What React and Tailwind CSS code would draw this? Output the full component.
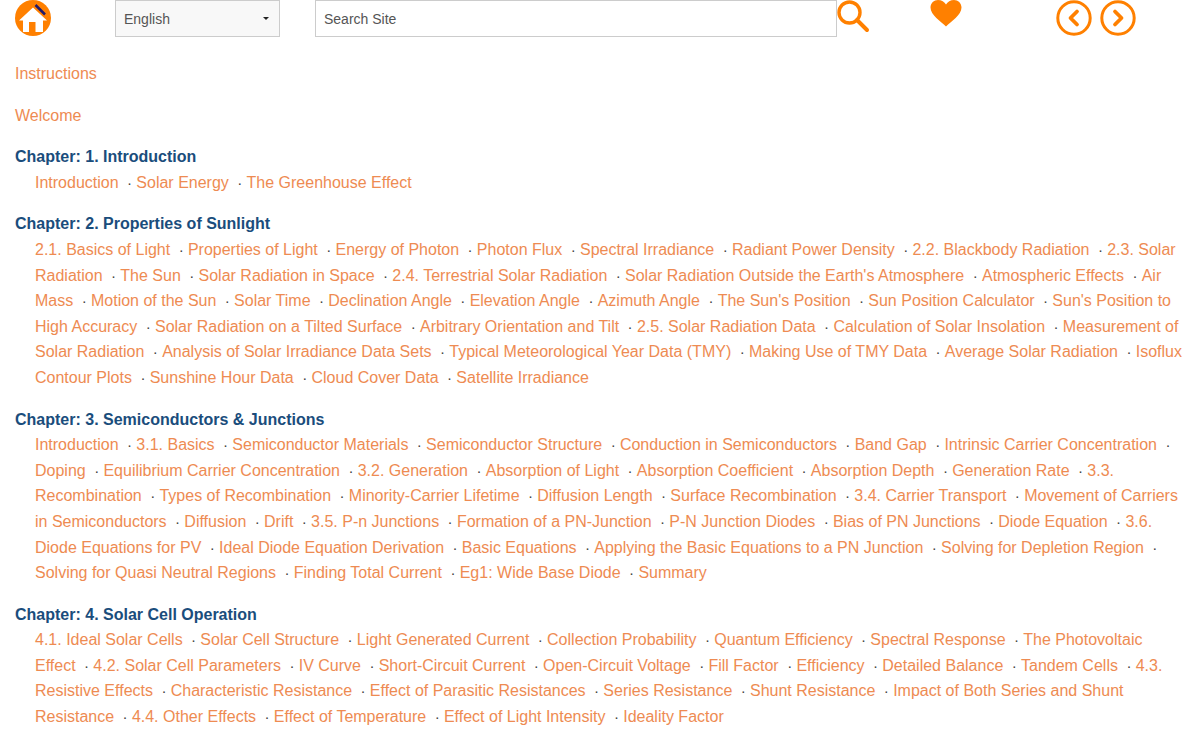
const chapters = [
  {
    title: 'Chapter: 1. Introduction',
    links: ['Introduction', 'Solar Energy', 'The Greenhouse Effect'],
  },
  {
    title: 'Chapter: 2. Properties of Sunlight',
    links: [
      '2.1. Basics of Light', 'Properties of Light', 'Energy of Photon', 'Photon Flux', 'Spectral Irradiance',
      'Radiant Power Density', '2.2. Blackbody Radiation', '2.3. Solar Radiation', 'The Sun', 'Solar Radiation in Space',
      '2.4. Terrestrial Solar Radiation', "Solar Radiation Outside the Earth's Atmosphere", 'Atmospheric Effects', 'Air Mass',
      'Motion of the Sun', 'Solar Time', 'Declination Angle', 'Elevation Angle', 'Azimuth Angle', "The Sun's Position",
      'Sun Position Calculator', "Sun's Position to High Accuracy", 'Solar Radiation on a Tilted Surface',
      'Arbitrary Orientation and Tilt', '2.5. Solar Radiation Data', 'Calculation of Solar Insolation',
      'Measurement of Solar Radiation', 'Analysis of Solar Irradiance Data Sets', 'Typical Meteorological Year Data (TMY)',
      'Making Use of TMY Data', 'Average Solar Radiation', 'Isoflux Contour Plots', 'Sunshine Hour Data', 'Cloud Cover Data',
      'Satellite Irradiance',
    ],
  },
  {
    title: 'Chapter: 3. Semiconductors & Junctions',
    links: [
      'Introduction', '3.1. Basics', 'Semiconductor Materials', 'Semiconductor Structure', 'Conduction in Semiconductors',
      'Band Gap', 'Intrinsic Carrier Concentration', 'Doping', 'Equilibrium Carrier Concentration', '3.2. Generation',
      'Absorption of Light', 'Absorption Coefficient', 'Absorption Depth', 'Generation Rate', '3.3. Recombination',
      'Types of Recombination', 'Minority-Carrier Lifetime', 'Diffusion Length', 'Surface Recombination',
      '3.4. Carrier Transport', 'Movement of Carriers in Semiconductors', 'Diffusion', 'Drift', '3.5. P-n Junctions',
      'Formation of a PN-Junction', 'P-N Junction Diodes', 'Bias of PN Junctions', 'Diode Equation',
      '3.6. Diode Equations for PV', 'Ideal Diode Equation Derivation', 'Basic Equations',
      'Applying the Basic Equations to a PN Junction', 'Solving for Depletion Region', 'Solving for Quasi Neutral Regions',
      'Finding Total Current', 'Eg1: Wide Base Diode', 'Summary',
    ],
  },
  {
    title: 'Chapter: 4. Solar Cell Operation',
    links: [
      '4.1. Ideal Solar Cells', 'Solar Cell Structure', 'Light Generated Current', 'Collection Probability',
      'Quantum Efficiency', 'Spectral Response', 'The Photovoltaic Effect', '4.2. Solar Cell Parameters', 'IV Curve',
      'Short-Circuit Current', 'Open-Circuit Voltage', 'Fill Factor', 'Efficiency', 'Detailed Balance', 'Tandem Cells',
      '4.3. Resistive Effects', 'Characteristic Resistance', 'Effect of Parasitic Resistances', 'Series Resistance',
      'Shunt Resistance', 'Impact of Both Series and Shunt Resistance', '4.4. Other Effects', 'Effect of Temperature',
      'Effect of Light Intensity', 'Ideality Factor',
    ],
  },
]

function HomeIcon() {
  return (
    <svg width="36" height="36" viewBox="0 0 36 36" className="shrink-0">
      <circle cx="18" cy="18" r="18" fill="#ff8000" />
      <path d="M18 7.500 L32 20.500 L28 20.500 L28 32 L20.500 32 L20.500 22 L14 22 L14 32 L8 32 L8 20.500 L4 20.500 Z" fill="#fff" />
      <path d="M20.500 5 L30 14.500" stroke="#1f1a6b" strokeWidth="2.500" />
    </svg>
  )
}

function ArrowCircle({ dir }) {
  return (
    <svg width="36" height="36" viewBox="0 0 36 36" fill="none" stroke="#ff8000" className="shrink-0">
      <circle cx="18" cy="18" r="16.200" strokeWidth="3" />
      <path
        d={dir === 'left' ? 'M21 11.500 L14.500 18 L21 24.500' : 'M15 11.500 L21.500 18 L15 24.500'}
        strokeWidth="3.800"
        strokeLinecap="round"
        strokeLinejoin="round"
      />
    </svg>
  )
}

export default function App() {
  return (
    <div className="h-[740px] overflow-hidden bg-white font-['Liberation_Sans',Arial,sans-serif] text-base leading-[25.6px]">
      {/* Toolbar */}
      <div className="flex h-[37px] items-start pl-[15px]">
        <HomeIcon />
        <div className="ml-16 flex h-[37px] w-[165px] items-center justify-between border border-[#ccc] bg-[#f8f8f8] pl-2 pr-[10px] text-sm text-[#555]">
          <span>English</span>
          <span className="h-0 w-0 border-x-[3px] border-t-[3px] border-x-transparent border-t-[#222]" />
        </div>
        <div className="ml-[35px] flex h-[37px] w-[522px] items-center border border-[#ccc] bg-white pl-2 text-sm text-[#555]">
          Search Site
        </div>
        <svg width="34" height="34" viewBox="0 0 34 34" fill="none" stroke="#ff8000" className="-ml-px shrink-0">
          <circle cx="13.500" cy="12.500" r="10.500" strokeWidth="3.400" />
          <path d="M21 20 L31 30" strokeWidth="4" strokeLinecap="round" />
        </svg>
        <svg width="32" height="27" viewBox="0 0 32 27" className="ml-[60px] shrink-0">
          <path d="M16 26.500 C11 21.500 0.500 15 0.500 7.500 C0.500 3 4 0 8 0 C11.500 0 14.500 2 16 4.500 C17.500 2 20.500 0 24 0 C28 0 31.500 3 31.500 7.500 C31.500 15 21 21.500 16 26.500 Z" fill="#ff8000" />
        </svg>
        <div className="ml-[94px] flex gap-2">
          <ArrowCircle dir="left" />
          <ArrowCircle dir="right" />
        </div>
      </div>

      <div className="px-[15px] pt-6 text-[#ee8b52]">
        <p>Instructions</p>
        <p className="mt-4">Welcome</p>

        {chapters.map((chapter) => (
          <div key={chapter.title} className="mt-4">
            <h2 className="font-bold text-[#1a4d7c]">{chapter.title}</h2>
            <p className="pl-5">
              {chapter.links.map((link, i) => (
                <span key={link + i}>
                  {i > 0 && <span className="text-[15.2px] text-[#444]">{'\u00a0\u00a0· '}</span>}
                  <a>{link}</a>
                </span>
              ))}
            </p>
          </div>
        ))}
      </div>
    </div>
  )
}
